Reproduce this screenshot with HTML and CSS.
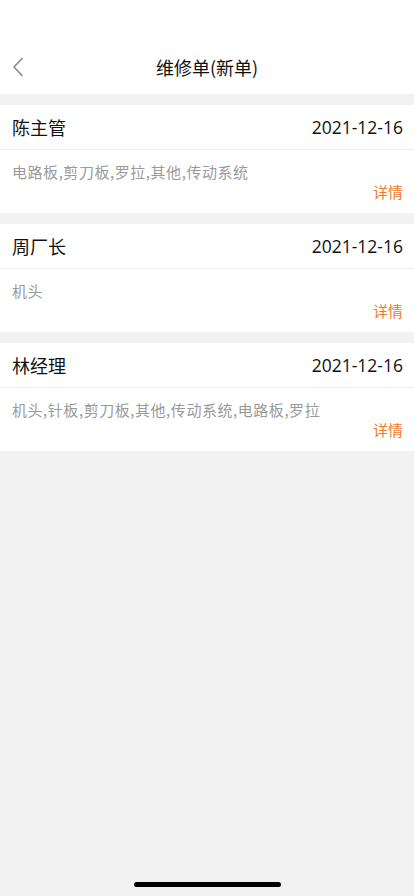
FILE: index.html
```html
<!DOCTYPE html>
<html lang="zh-CN">
<head>
    <meta charset="UTF-8">
    <meta name="viewport" content="width=device-width, initial-scale=1.0">
    <title>维修单(新单)</title>
    <link rel="stylesheet" href="styles.css">
</head>
<body>
<div class="page">
    <div class="navbar">
        <span class="back">
            <svg width="14" height="20" viewBox="0 0 14 20"><path d="M11 1.5 L3 10 L11 18.5" fill="none" stroke="#8a8a8a" stroke-width="1.6" stroke-linecap="round" stroke-linejoin="round"/></svg>
        </span>
        <h1 class="title">维修单(新单)</h1>
    </div>

    <div class="list">
        <div class="card">
            <div class="card-head">
                <span class="name">陈主管</span>
                <span class="date">2021-12-16</span>
            </div>
            <div class="card-body">
                <div class="parts">电路板,剪刀板,罗拉,其他,传动系统</div>
                <div class="more">详情</div>
            </div>
        </div>
        <div class="card">
            <div class="card-head">
                <span class="name">周厂长</span>
                <span class="date">2021-12-16</span>
            </div>
            <div class="card-body">
                <div class="parts">机头</div>
                <div class="more">详情</div>
            </div>
        </div>
        <div class="card">
            <div class="card-head">
                <span class="name">林经理</span>
                <span class="date">2021-12-16</span>
            </div>
            <div class="card-body">
                <div class="parts">机头,针板,剪刀板,其他,传动系统,电路板,罗拉</div>
                <div class="more">详情</div>
            </div>
        </div>
    </div>

    <div class="home-bar"></div>
</div>
</body>
</html>
```
FILE: styles.css
```css
body {
    margin: 0;
    padding: 0;
    background-color: #f2f2f2;
    font-family: "Noto Sans CJK SC", "Noto Sans", sans-serif;
}
.page {
    position: relative;
    width: 414px;
    height: 896px;
    background-color: #f2f2f2;
    overflow: hidden;
}
.navbar {
    position: relative;
    height: 94px;
    background: #fff;
    display: flex;
    align-items: flex-end;
    justify-content: center;
}
.back {
    position: absolute;
    left: 11px;
    top: 57px;
    width: 14px;
    height: 20px;
}
.back svg {
    display: block;
}
.title {
    margin: 0 0 14px;
    font-size: 18px;
    font-weight: 400;
    line-height: 26px;
    color: #111;
}
.list {
    display: flex;
    flex-direction: column;
    gap: 11px;
    padding-top: 11px;
}
.card {
    background: #fff;
}
.card-head {
    height: 44px;
    display: flex;
    align-items: center;
    justify-content: space-between;
    padding: 0 11px 0 12px;
    border-bottom: 1px solid #eeeeee;
}
.name {
    font-size: 18px;
    color: #111;
}
.date {
    font-size: 17.5px;
    color: #111;
    font-family: "Open Sans", "Noto Sans", sans-serif;
}
.card-body {
    padding: 11px 11px 12px 12px;
}
.parts {
    font-size: 15px;
    line-height: 22px;
    letter-spacing: 0.55px;
    color: #9a9a9a;
}
.more {
    text-align: right;
    font-size: 15px;
    line-height: 18px;
    color: #ee7a2e;
}
.home-bar {
    position: absolute;
    left: 134px;
    bottom: 9px;
    width: 147px;
    height: 5px;
    border-radius: 3px;
    background: #000;
}
```
